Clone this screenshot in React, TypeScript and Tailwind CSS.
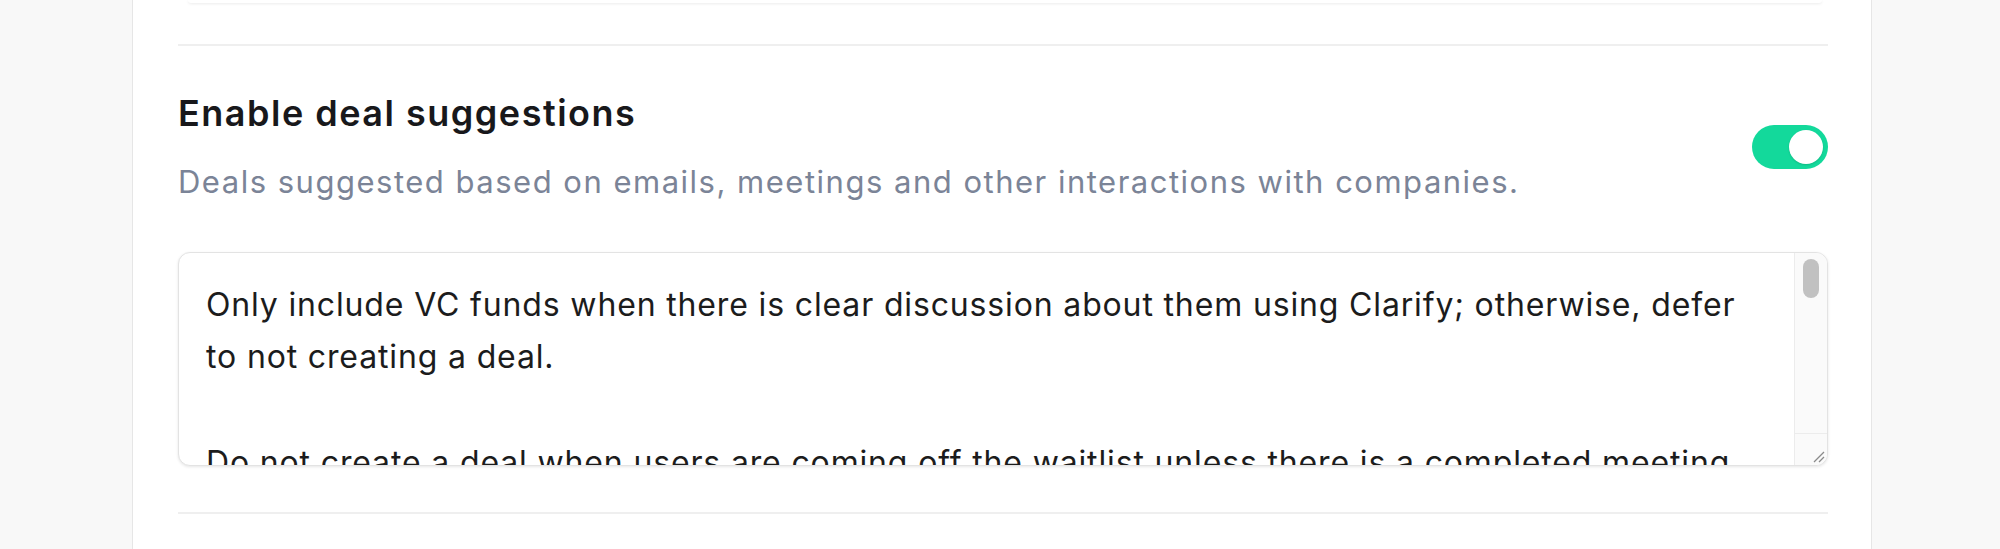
export default function App() {
  return (
    <div className="min-h-screen bg-[#f8f8f8] font-['Inter','Noto_Sans',sans-serif]">
      <div className="ml-[132px] w-[1740px] h-[549px] overflow-hidden bg-white border-x border-[#e6e6e6] pl-[45px] pr-[43px]">
        {/* bottom of the previous card */}
        <div className="ml-[10px] mr-[6px] h-[3px] rounded-b-lg bg-white shadow-[0_1px_3px_rgba(0,0,0,0.08)]" />

        <div className="mt-[41px] h-[2px] bg-[#efefef]" />

        {/* Deal suggestions setting */}
        <div className="flex items-center justify-between pt-[45px]">
          <div>
            <h2 className="text-[36px] leading-[44px] font-semibold text-[#18181b] tracking-[1.5px]">
              Enable deal suggestions
            </h2>
            <p className="mt-[27px] text-[31px] leading-[40px] text-[#7b8497] tracking-[1.5px]">
              Deals suggested based on emails, meetings and other interactions with companies.
            </p>
          </div>
          <button className="flex h-[44px] w-[76px] items-center justify-end rounded-full bg-[#13d99b] px-[5px]">
            <span className="block h-[34px] w-[34px] rounded-full bg-white shadow-[0_1px_2px_rgba(0,0,0,0.15)]" />
          </button>
        </div>

        <div className="mt-[50px] flex h-[214px] overflow-hidden rounded-xl border border-[#e3e3e3] bg-white shadow-[0_1px_3px_rgba(0,0,0,0.1)]">
          <div className="flex-1 overflow-hidden pl-[27px] pt-[26px] text-[32px] leading-[52px] text-[#1c1c1c] tracking-[0.85px]">
            <div className="whitespace-nowrap">
              Only include VC funds when there is clear discussion about them using Clarify; otherwise, defer
            </div>
            <div className="whitespace-nowrap">to not creating a deal.</div>
            <div className="h-[54px]" />
            <div className="whitespace-nowrap">
              Do not create a deal when users are coming off the waitlist unless there is a completed meeting
            </div>
          </div>
          <div className="flex w-[33px] flex-col border-l border-[#ececec] bg-[#fafafa]">
            <div className="flex-1 px-[8px] pt-[6px]">
              <div className="h-[39px] w-[16px] rounded-full bg-[#c1c1c1]" />
            </div>
            <div className="flex h-[32px] items-end justify-end border-t border-[#ececec] p-[2px]">
              <svg width="16" height="16" viewBox="0 0 16 16" className="text-[#8a8a8a]">
                <path d="M15 5 L5 15 M15 10 L10 15" stroke="currentColor" strokeWidth="1.3" fill="none" />
              </svg>
            </div>
          </div>
        </div>

        <div className="mt-[46px] h-[2px] bg-[#efefef]" />
      </div>
    </div>
  );
}
